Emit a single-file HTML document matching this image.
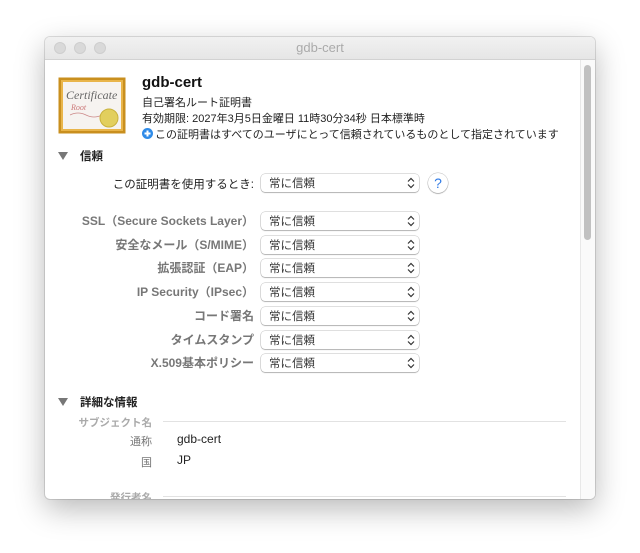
<!DOCTYPE html>
<html><head><meta charset="utf-8"><style>
body{margin:0;width:640px;height:553px;background:#fff;position:relative;overflow:hidden;font-family:"Liberation Sans","Noto Sans CJK JP",sans-serif;font-size:12px;color:#222}
.win{position:absolute;left:45px;top:37px;width:550px;height:462px;background:#fff;border-radius:5px;box-shadow:0 10px 30px rgba(0,0,0,.28),0 0 0 1px rgba(0,0,0,.12);overflow:hidden}
.tb{position:absolute;left:0;top:0;width:550px;height:22px;background:linear-gradient(#f1f1f1,#e6e6e6);border-bottom:1px solid #d2d2d2;text-align:center;line-height:22px;font-size:13px;color:#aaa}
.dot{position:absolute;top:5px;width:12px;height:12px;border-radius:50%;background:#d9d9d9;border:1px solid #cecece;box-sizing:border-box}
.a{position:absolute;white-space:nowrap}
.lbl{position:absolute;right:341px;white-space:nowrap;color:#777;font-weight:bold;font-size:12px}
.pop{position:absolute;left:216px;width:158px;height:18px;border-radius:4px;background:#fff;box-shadow:0 0 0 .5px rgba(0,0,0,.25),0 1px 1px rgba(0,0,0,.2);font-size:11.5px;line-height:20px;padding-left:8px;box-sizing:border-box;color:#333}
.arr{position:absolute;right:4px;top:3px}
.tri{position:absolute;width:0;height:0;border-left:5px solid transparent;border-right:5px solid transparent;border-top:8px solid #777}
.sb{position:absolute;left:535px;top:23px;width:15px;height:439px;background:#fafafa;border-left:1px solid #e8e8e8}
.th{position:absolute;left:3px;top:5px;width:7px;height:175px;border-radius:4px;background:#c1c1c1}
.hr{position:absolute;left:118px;width:403px;height:1px;background:#e2e2e2}
</style></head><body>
<div class="win">
<div class="tb">gdb-cert</div>
<div class="dot" style="left:9px"></div><div class="dot" style="left:29px"></div><div class="dot" style="left:49px"></div>
<div class="sb"><div class="th"></div></div>
<svg class="a" style="left:13px;top:40px" width="68" height="57"><rect x="0.5" y="0.5" width="67" height="56" fill="#c98f1e"/><rect x="3" y="3" width="62" height="51" fill="#e9b54a"/><rect x="5" y="5" width="58" height="47" fill="#f6f3f0"/><text x="8" y="22" font-family="Liberation Serif,serif" font-style="italic" font-size="12" fill="#666">Certificate</text><text x="13" y="33" font-family="Liberation Serif,serif" font-style="italic" font-size="8" fill="#c77">Root</text><path d="M12 38q8 -4 16 0q8 4 16 0" stroke="#c88" fill="none" stroke-width=".7"/><circle cx="51" cy="41" r="9" fill="#e2cf5e" stroke="#c9b23d"/></svg>
<div class="a" style="left:97px;top:37px;font-size:15px;font-weight:bold;color:#111">gdb-cert</div>
<div class="a" style="left:97px;top:57px;font-size:11px">自己署名ルート証明書</div>
<div class="a" style="left:97px;top:73px;font-size:11px">有効期限: 2027年3月5日金曜日 11時30分34秒 日本標準時</div>
<svg class="a" style="left:97px;top:91px" width="11" height="11"><circle cx="5.5" cy="5.5" r="5.5" fill="#2f8be8"/><path d="M5.5 2.5v6M2.5 5.5h6" stroke="#fff" stroke-width="2"/></svg>
<div class="a" style="left:110px;top:89px;font-size:11px">この証明書はすべてのユーザにとって信頼されているものとして指定されています</div>
<div class="tri" style="left:13px;top:115px"></div>
<div class="a" style="left:35px;top:111px;font-size:11.5px;font-weight:bold">信頼</div>
<div class="a" style="right:341px;top:139px;font-size:11.5px">この証明書を使用するとき:</div>
<div class="pop" style="top:137px">常に信頼<svg class="arr" width="8" height="12"><path d="M1 4.5l3-3 3 3M1 7.5l3 3 3-3" stroke="#333" fill="none" stroke-width="1.2"/></svg></div>
<div class="a" style="left:383px;top:136px;width:20px;height:20px;border-radius:50%;background:#fff;box-shadow:0 0 0 .5px rgba(0,0,0,.25),0 1px 1px rgba(0,0,0,.2);text-align:center;line-height:20px;color:#2f7ae5;font-size:14px">?</div>

<div class="lbl" style="top:175px">SSL（Secure Sockets Layer）</div>
<div class="pop" style="top:175px">常に信頼<svg class="arr" width="8" height="12"><path d="M1 4.5l3-3 3 3M1 7.5l3 3 3-3" stroke="#333" fill="none" stroke-width="1.2"/></svg></div>
<div class="lbl" style="top:199px">安全なメール（S/MIME）</div>
<div class="pop" style="top:199px">常に信頼<svg class="arr" width="8" height="12"><path d="M1 4.5l3-3 3 3M1 7.5l3 3 3-3" stroke="#333" fill="none" stroke-width="1.2"/></svg></div>
<div class="lbl" style="top:222px">拡張認証（EAP）</div>
<div class="pop" style="top:222px">常に信頼<svg class="arr" width="8" height="12"><path d="M1 4.5l3-3 3 3M1 7.5l3 3 3-3" stroke="#333" fill="none" stroke-width="1.2"/></svg></div>
<div class="lbl" style="top:246px">IP Security（IPsec）</div>
<div class="pop" style="top:246px">常に信頼<svg class="arr" width="8" height="12"><path d="M1 4.5l3-3 3 3M1 7.5l3 3 3-3" stroke="#333" fill="none" stroke-width="1.2"/></svg></div>
<div class="lbl" style="top:270px">コード署名</div>
<div class="pop" style="top:270px">常に信頼<svg class="arr" width="8" height="12"><path d="M1 4.5l3-3 3 3M1 7.5l3 3 3-3" stroke="#333" fill="none" stroke-width="1.2"/></svg></div>
<div class="lbl" style="top:294px">タイムスタンプ</div>
<div class="pop" style="top:294px">常に信頼<svg class="arr" width="8" height="12"><path d="M1 4.5l3-3 3 3M1 7.5l3 3 3-3" stroke="#333" fill="none" stroke-width="1.2"/></svg></div>
<div class="lbl" style="top:317px">X.509基本ポリシー</div>
<div class="pop" style="top:317px">常に信頼<svg class="arr" width="8" height="12"><path d="M1 4.5l3-3 3 3M1 7.5l3 3 3-3" stroke="#333" fill="none" stroke-width="1.2"/></svg></div>

<div class="tri" style="left:13px;top:361px"></div>
<div class="a" style="left:35px;top:357px;font-size:11.5px;font-weight:bold">詳細な情報</div>
<div class="a" style="right:443px;top:378px;font-size:10.5px;color:#aaa;font-weight:bold">サブジェクト名</div>
<div class="hr" style="top:384px"></div>
<div class="a" style="right:443px;top:396px;font-size:11px;color:#777">通称</div>
<div class="a" style="left:132px;top:395px;font-size:12px">gdb-cert</div>
<div class="a" style="right:443px;top:417px;font-size:11px;color:#777">国</div>
<div class="a" style="left:132px;top:416px;font-size:12px">JP</div>
<div class="a" style="right:443px;top:453px;font-size:10.5px;color:#aaa;font-weight:bold">発行者名</div>
<div class="hr" style="top:459px"></div>
</div>
</body></html>
